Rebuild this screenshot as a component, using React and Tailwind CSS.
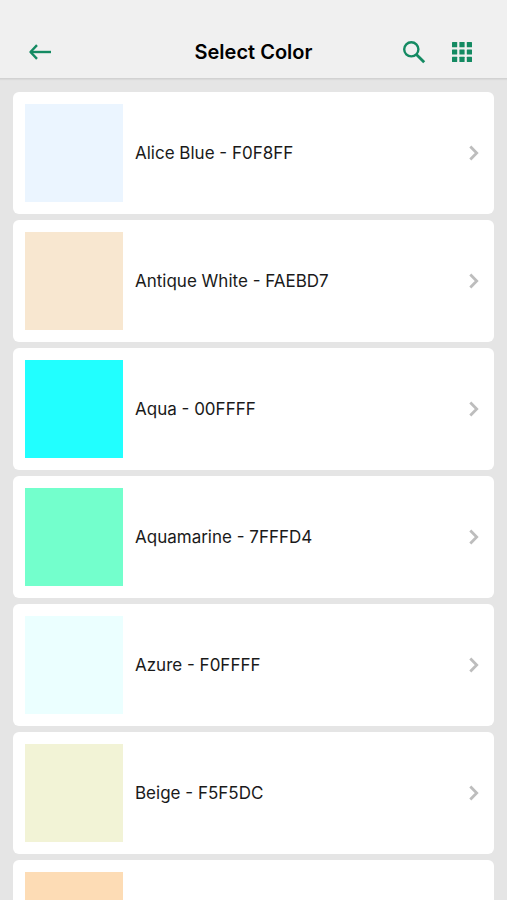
const colors = [
  { name: 'Alice Blue', hex: 'F0F8FF', swatch: 'bg-[#ebf5ff]' },
  { name: 'Antique White', hex: 'FAEBD7', swatch: 'bg-[#f8e7d0]' },
  { name: 'Aqua', hex: '00FFFF', swatch: 'bg-[#21ffff]' },
  { name: 'Aquamarine', hex: '7FFFD4', swatch: 'bg-[#73ffcc]' },
  { name: 'Azure', hex: 'F0FFFF', swatch: 'bg-[#ebffff]' },
  { name: 'Beige', hex: 'F5F5DC', swatch: 'bg-[#f2f3d6]' },
  { name: 'Bisque', hex: 'FFE4C4', swatch: 'bg-[#fddcb5]' },
];

const BackIcon = () => (
  <svg viewBox="0 0 24 24" className="size-6" fill="none" stroke="currentColor" strokeWidth="2.4" aria-hidden="true">
    <path d="M23 12H2.5" />
    <path d="M9 5.2 2.5 12 9 18.8" strokeLinejoin="round" />
  </svg>
);

const SearchIcon = () => (
  <svg viewBox="0 0 24 24" className="size-6" fill="none" stroke="currentColor" strokeWidth="2.4" aria-hidden="true">
    <circle cx="9.3" cy="9.3" r="7.1" />
    <path d="m14.4 14.4 7.8 7.8" strokeWidth="2.8" />
  </svg>
);

const GridIcon = () => (
  <svg viewBox="0 0 24 24" className="size-6" fill="currentColor" aria-hidden="true">
    {[2, 9.4, 16.8].map((y) =>
      [2, 9.4, 16.8].map((x) => <rect key={`${x}-${y}`} x={x} y={y} width="5.2" height="5.2" rx="0.5" />)
    )}
  </svg>
);

const ChevronIcon = () => (
  <svg viewBox="0 0 12 18" className="h-[18px] w-3 shrink-0 text-[#bdbdbd]" fill="none" stroke="currentColor" strokeWidth="2.8" aria-hidden="true">
    <path d="m2.3 2.5 6.4 6.5-6.4 6.5" />
  </svg>
);

const Header = () => (
  <header className="sticky top-0 grid grid-cols-[1fr_auto_1fr] items-center border-b border-[#d2d2d2] bg-[#f0f0f0] px-7 pt-[26px] shadow-[0_1px_1px_#dadada]">
    <button type="button" aria-label="Back" className="justify-self-start text-[#148a62]">
      <BackIcon />
    </button>
    <h1 className="text-xl leading-[52px] font-semibold text-black">Select Color</h1>
    <div className="flex items-center gap-6 justify-self-end pr-[5px] text-[#148a62]">
      <button type="button" aria-label="Search">
        <SearchIcon />
      </button>
      <button type="button" aria-label="Grid view">
        <GridIcon />
      </button>
    </div>
  </header>
);

const ColorRow = ({ color }) => (
  <li>
    <button type="button" className="flex w-full items-center gap-3 rounded-md bg-white py-3 pr-[14px] pl-3 text-left">
      <span className={`size-[98px] shrink-0 ${color.swatch}`} />
      <span className="grow text-[17px] leading-6 text-[#1a1a1a]">
        {color.name} - {color.hex}
      </span>
      <ChevronIcon />
    </button>
  </li>
);

const App = () => (
  <div className="min-h-screen bg-[#e5e5e5] font-['Inter',sans-serif]">
    <Header />
    <main className="p-[13px]">
      <ul className="flex flex-col gap-[6px]">
        {colors.map((color) => (
          <ColorRow key={color.hex} color={color} />
        ))}
      </ul>
    </main>
  </div>
);

export default App;
